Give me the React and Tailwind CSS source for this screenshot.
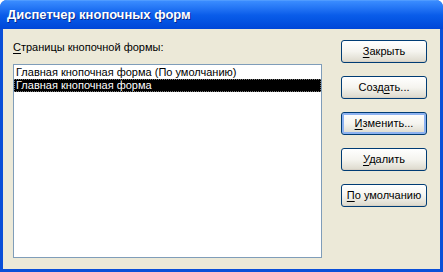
import React from 'react';

const buttons = [
  { pre: '', u: 'З', post: 'акрыть' },
  { pre: 'Созд', u: 'а', post: 'ть...' },
  { pre: '', u: 'И', post: 'зменить...', active: true },
  { pre: '', u: 'У', post: 'далить' },
  { pre: '', u: 'П', post: 'о умолчанию' },
];

function XpButton({ b }) {
  return (
    <button
      className={`h-[23px] w-[86px] rounded-[3px] border border-[#003C74] bg-gradient-to-b from-[#FFFFFF] via-[#F5F4EF] to-[#DCD9CC] text-[11px] text-black leading-none ${
        b.active ? 'shadow-[inset_0_0_0_2px_#8DB2F0]' : 'shadow-[inset_0_-1px_0_#D6D0C5]'
      }`}
    >
      {b.pre}
      <span className="underline underline-offset-2">{b.u}</span>
      {b.post}
    </button>
  );
}

export default function App() {
  return (
    <div className="w-[443px] h-[272px] flex flex-col bg-[#0A4FD8] rounded-t-[7px] overflow-hidden font-['Liberation_Sans',Arial,sans-serif]">
      {/* title bar */}
      <div className="h-[29px] shrink-0 flex items-center px-[7px] bg-gradient-to-b from-[#3A8CFF] via-[#0A5DEA] to-[#0046D8] border-t border-[#4F9BFF]">
        <span className="text-white font-bold text-[13px] [text-shadow:1px_1px_0_#0A2A8C]">
          Диспетчер кнопочных форм
        </span>
      </div>

      {/* body */}
      <div className="flex-1 mx-[3px] mb-[3px] bg-[#ECE9D8] flex pl-[10px]">
        <div className="flex flex-col pt-[12px]">
          <div className="text-[11px] leading-[13px] text-black h-[13px]">
            <span className="underline underline-offset-2">С</span>траницы кнопочной формы:
          </div>
          <div className="mt-[10px] w-[309px] h-[194px] border border-[#7F9DB9] bg-white text-[11px] leading-[13px]">
            <div className="px-[2px] h-[14px] flex items-center text-black">
              Главная кнопочная форма (По умолчанию)
            </div>
            <div className="px-[2px] h-[13px] flex items-center bg-black text-white outline-1 outline-dotted outline-offset-[-1px] outline-[#777]">
              Главная кнопочная форма
            </div>
          </div>
        </div>

        <div className="ml-[19px] pt-[11px] flex flex-col gap-[13px]">
          {buttons.map((b, i) => (
            <XpButton key={i} b={b} />
          ))}
        </div>
      </div>
    </div>
  );
}
